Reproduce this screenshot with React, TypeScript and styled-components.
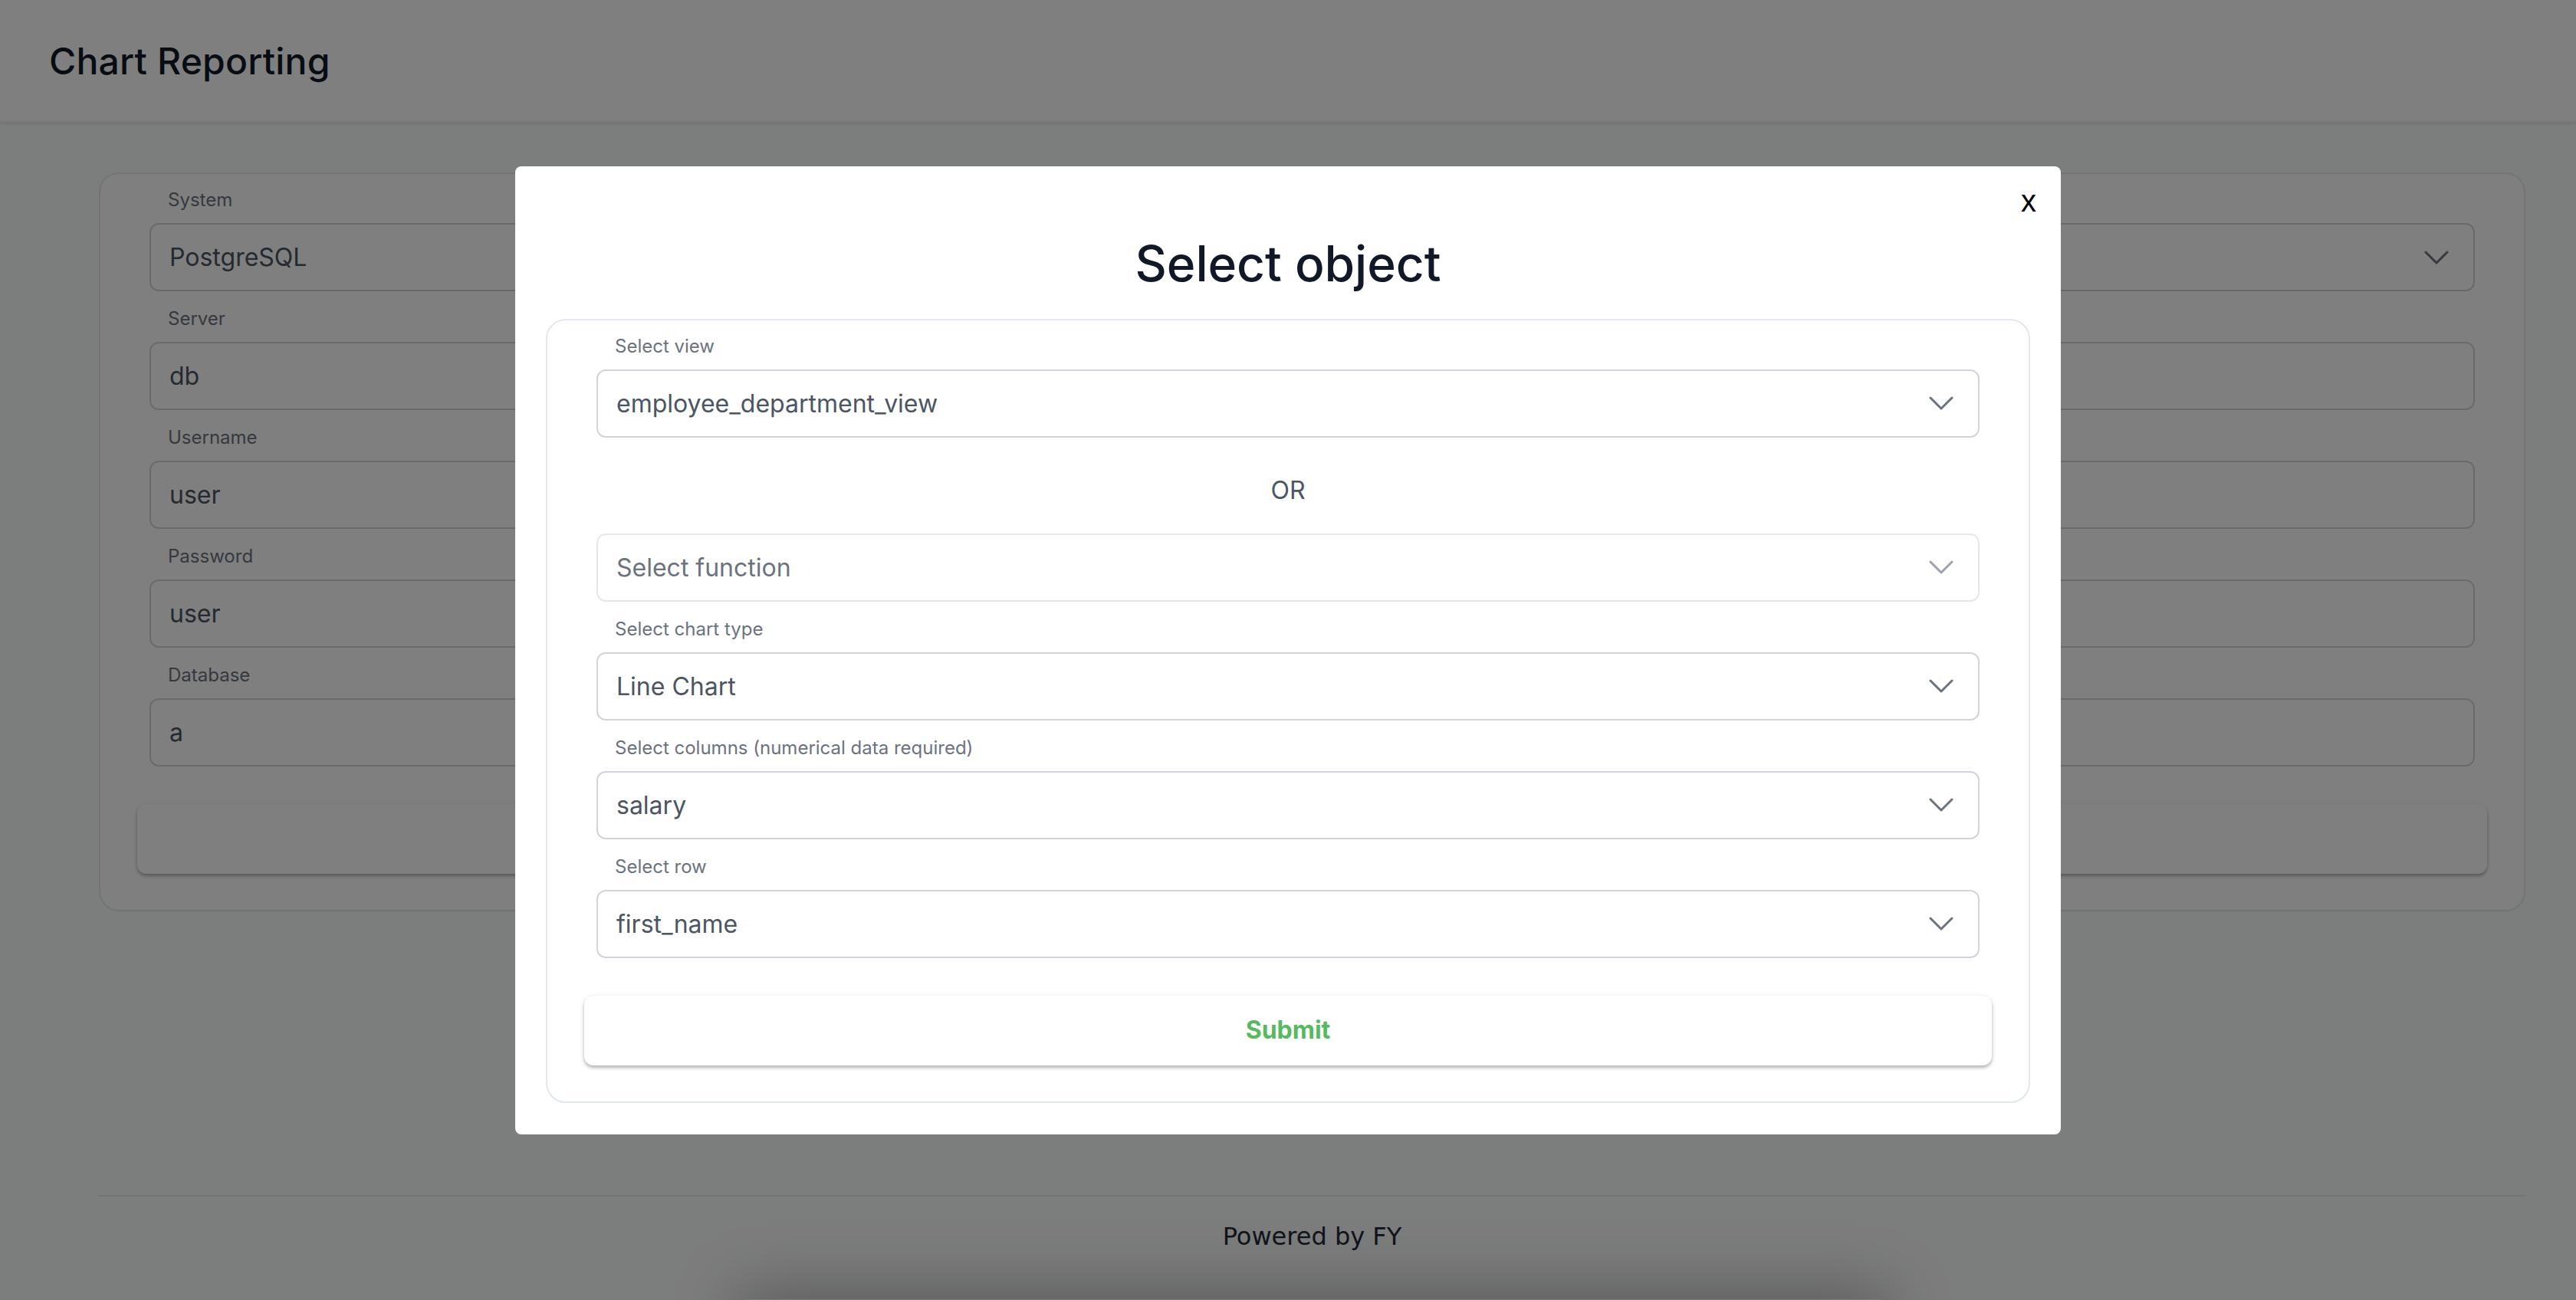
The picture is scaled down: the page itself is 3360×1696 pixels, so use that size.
import React from "react";
import styled, { createGlobalStyle } from "styled-components";

const GlobalStyle = createGlobalStyle`
  html, body { margin: 0; padding: 0; }
  body {
    background: #f9fafb;
    font-family: Inter, "Noto Sans", sans-serif;
    color: #111827;
  }
  * { box-sizing: border-box; }
`;

const Page = styled.div`
  display: flex;
  flex-direction: column;
  min-height: 100vh;
`;

const Header = styled.header`
  height: 160px;
  background: #ffffff;
  display: flex;
  align-items: center;
  padding: 0 64px;
  box-shadow: 0 2px 3px rgba(0, 0, 0, 0.08);
  border-bottom: 2px solid #eceef1;
`;

const AppTitle = styled.h1`
  margin: 0;
  font-size: 48px;
  font-weight: 500;
  color: #111827;
  letter-spacing: 0.2px;
`;

const Main = styled.main`
  padding: 65px 66px 0 129px;
`;

const FormCard = styled.div`
  background: #ffffff;
  border: 2px solid #e2e8f0;
  border-radius: 26px;
  padding: 0 48px 47px;
  display: flex;
  flex-direction: column;
`;

const Field = styled.div`
  display: flex;
  flex-direction: column;
  padding: 16px 16px 0;
  &:first-child { padding-top: 14px; }
`;

const Label = styled.label`
  font-size: 24px;
  line-height: 40px;
  color: #6b7280;
  padding-left: 24px;
  margin-bottom: 10px;
`;

const boxBase = `
  height: 89px;
  width: 100%;
  border-radius: 12px;
  background: #ffffff;
  font-family: Inter, "Noto Sans", sans-serif;
  font-size: 32px;
  padding: 0 24px;
`;

const TextInput = styled.input`
  ${boxBase}
  border: 2px solid #d1d5db;
  color: #4b5563;
  outline: none;
`;

const SelectBox = styled.div<{ $muted?: boolean }>`
  ${boxBase}
  border: 2px solid ${(p) => (p.$muted ? "#e5e7eb" : "#d1d5db")};
  color: ${(p) => (p.$muted ? "#6b7280" : "#4b5563")};
  display: flex;
  align-items: center;
  justify-content: space-between;
  padding-right: 32px;
`;

const Chevron = styled.svg<{ $muted?: boolean }>`
  width: 32px;
  height: 18px;
  flex: none;
  stroke: ${(p) => (p.$muted ? "#9ca3af" : "#6b7280")};
`;

const BareField = styled.div`
  padding: 0 16px;
`;

const OrText = styled.div`
  text-align: center;
  font-size: 32px;
  line-height: 48px;
  color: #4b5563;
  margin: 45px 0 32px;
`;

const ActionButton = styled.button`
  margin-top: 49px;
  height: 91px;
  width: 100%;
  border: none;
  border-radius: 12px;
  background: #ffffff;
  box-shadow: 0 3px 4px rgba(0, 0, 0, 0.28), 0 0 8px rgba(0, 0, 0, 0.06);
  font-family: Inter, "Noto Sans", sans-serif;
  font-size: 32px;
  font-weight: 700;
  line-height: 40px;
  padding: 0;
  color: #55bb5e;
  cursor: pointer;
`;

const Footer = styled.footer`
  margin: 370px 66px 0 129px;
  border-top: 2px solid #e5e7eb;
  padding: 28px 0;
  text-align: center;
  font-family: "DejaVu Sans", sans-serif;
  font-size: 32px;
  line-height: 48px;
  color: #1f2937;
`;

const BelowFold = styled.div`
  align-self: center;
  margin: 30px 0 0 66px;
  width: 1480px;
  height: 400px;
  background: #f9fafb;
  box-shadow: 0 0 80px 10px rgba(0, 0, 0, 0.28);
`;

const Overlay = styled.div`
  position: fixed;
  inset: 0;
  background: rgba(0, 0, 0, 0.5);
  display: flex;
  align-items: center;
  justify-content: center;
`;

const Modal = styled.div`
  position: relative;
  width: 60%;
  background: #ffffff;
  border-radius: 8px;
  padding: 88px 40px 41px 40px;
  display: flex;
  flex-direction: column;
`;

const CloseButton = styled.button`
  position: absolute;
  top: 17px;
  right: 32px;
  border: none;
  background: transparent;
  padding: 0;
  font-family: "Liberation Sans", Arial, sans-serif;
  font-size: 40px;
  line-height: 56px;
  color: #000000;
  cursor: pointer;
`;

const ModalTitle = styled.h2`
  margin: 0 0 34px;
  text-align: center;
  font-size: 64px;
  font-weight: 500;
  line-height: 77px;
  color: #111827;
`;

const ChevronIcon = ({ muted }: { muted?: boolean }) => (
  <Chevron $muted={muted} viewBox="0 0 32 18" fill="none" strokeWidth="3" strokeLinecap="round" strokeLinejoin="round">
    <polyline points="2,2 16,16 30,2" />
  </Chevron>
);

const SelectField = ({ label, value, muted }: { label?: string; value: string; muted?: boolean }) => {
  const box = (
    <SelectBox $muted={muted}>
      <span>{value}</span>
      <ChevronIcon muted={muted} />
    </SelectBox>
  );
  if (!label) return <BareField>{box}</BareField>;
  return (
    <Field>
      <Label>{label}</Label>
      {box}
    </Field>
  );
};

const InputField = ({ label, value }: { label: string; value: string }) => (
  <Field>
    <Label>{label}</Label>
    <TextInput readOnly value={value} />
  </Field>
);

export default function App() {
  return (
    <>
      <GlobalStyle />
      <Page>
        <Header>
          <AppTitle>Chart Reporting</AppTitle>
        </Header>
        <Main>
          <FormCard>
            <SelectField label="System" value="PostgreSQL" />
            <InputField label="Server" value="db" />
            <InputField label="Username" value="user" />
            <InputField label="Password" value="user" />
            <InputField label="Database" value="a" />
            <ActionButton aria-label="Connect" />
          </FormCard>
        </Main>
        <Footer>Powered by FY</Footer>
        <BelowFold />
      </Page>
      <Overlay>
        <Modal>
          <CloseButton>x</CloseButton>
          <ModalTitle>Select object</ModalTitle>
          <FormCard>
            <SelectField label="Select view" value="employee_department_view" />
            <OrText>OR</OrText>
            <SelectField value="Select function" muted />
            <SelectField label="Select chart type" value="Line Chart" />
            <SelectField label="Select columns (numerical data required)" value="salary" />
            <SelectField label="Select row" value="first_name" />
            <ActionButton>Submit</ActionButton>
          </FormCard>
        </Modal>
      </Overlay>
    </>
  );
}
